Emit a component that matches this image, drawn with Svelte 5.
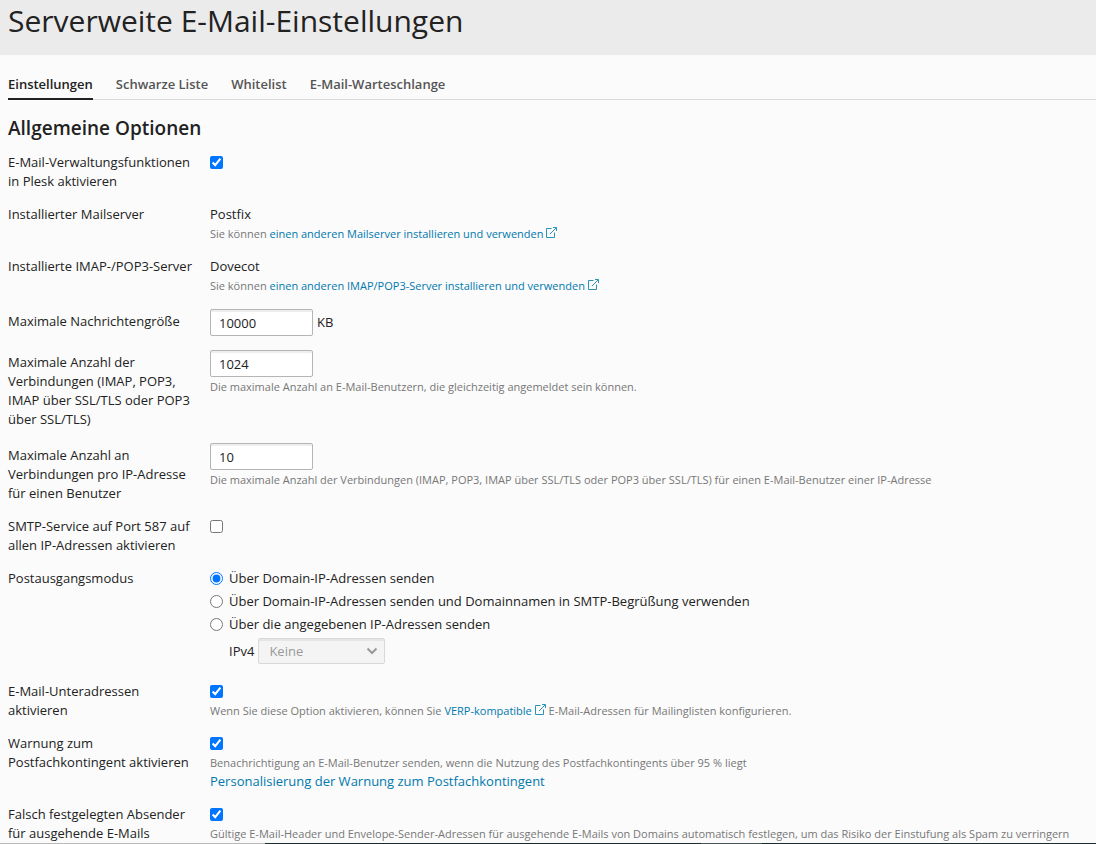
<script>
    let tabs = ['Einstellungen', 'Schwarze Liste', 'Whitelist', 'E-Mail-Warteschlange'];
    let activeTab = 'Einstellungen';

    let mailManagement = true;
    let messageSize = 10000;
    let maxConnections = 1024;
    let maxPerIp = 10;
    let submission = false;
    let outgoingMode = 'domain';
    let subAddresses = true;
    let quotaWarning = true;
    let fixSender = true;

    const modes = [
        { value: 'domain', label: 'Über Domain-IP-Adressen senden' },
        { value: 'greeting', label: 'Über Domain-IP-Adressen senden und Domainnamen in SMTP-Begrüßung verwenden' },
        { value: 'explicit', label: 'Über die angegebenen IP-Adressen senden' }
    ];
</script>

{#snippet external()}
    <svg class="external" width="11" height="11" viewBox="0 0 11 11" aria-hidden="true">
        <path d="M5.5 1.5h-5v9h8v-5M4 7l6-6M7 .5h3.5V4" />
    </svg>
{/snippet}

<header>
    <h1>Serverweite E-Mail-Einstellungen</h1>
</header>

<nav>
    {#each tabs as tab}
        <a href="#{tab}" class:active={tab === activeTab} on:click|preventDefault={() => (activeTab = tab)}>{tab}</a>
    {/each}
</nav>

<main>
    <h2>Allgemeine Optionen</h2>

    <form>
        <div class="row">
            <label for="management">E-Mail-Verwaltungsfunktionen in Plesk aktivieren</label>
            <div class="field">
                <div class="line"><input id="management" type="checkbox" bind:checked={mailManagement} /></div>
            </div>
        </div>

        <div class="row">
            <span class="name">Installierter Mailserver</span>
            <div class="field">
                <div>Postfix</div>
                <div class="hint">Sie können <a href="#mailserver">einen anderen Mailserver installieren und verwenden {@render external()}</a></div>
            </div>
        </div>

        <div class="row">
            <span class="name">Installierte IMAP-/POP3-Server</span>
            <div class="field">
                <div>Dovecot</div>
                <div class="hint">Sie können <a href="#imap">einen anderen IMAP/POP3-Server installieren und verwenden {@render external()}</a></div>
            </div>
        </div>

        <div class="row boxed">
            <label for="size">Maximale Nachrichtengröße</label>
            <div class="field">
                <div class="inline"><input id="size" type="text" bind:value={messageSize} /> KB</div>
            </div>
        </div>

        <div class="row boxed">
            <label for="connections">Maximale Anzahl der Verbindungen (IMAP, POP3, IMAP über SSL/TLS oder POP3 über SSL/TLS)</label>
            <div class="field">
                <div class="inline"><input id="connections" type="text" bind:value={maxConnections} /></div>
                <div class="hint">Die maximale Anzahl an E-Mail-Benutzern, die gleichzeitig angemeldet sein können.</div>
            </div>
        </div>

        <div class="row boxed">
            <label for="per-ip">Maximale Anzahl an Verbindungen pro IP-Adresse für einen Benutzer</label>
            <div class="field">
                <div class="inline"><input id="per-ip" type="text" bind:value={maxPerIp} /></div>
                <div class="hint">Die maximale Anzahl der Verbindungen (IMAP, POP3, IMAP über SSL/TLS oder POP3 über SSL/TLS) für einen E-Mail-Benutzer einer IP-Adresse</div>
            </div>
        </div>

        <div class="row">
            <label for="submission">SMTP-Service auf Port 587 auf allen IP-Adressen aktivieren</label>
            <div class="field">
                <div class="line"><input id="submission" type="checkbox" bind:checked={submission} /></div>
            </div>
        </div>

        <div class="row">
            <span class="name">Postausgangsmodus</span>
            <div class="field modes">
                {#each modes as mode}
                    <label class="line">
                        <input type="radio" name="mode" value={mode.value} bind:group={outgoingMode} />
                        {mode.label}
                    </label>
                {/each}
                <div class="address">
                    <label for="ipv4">IPv4</label>
                    <div class="select">
                        <select id="ipv4" disabled={outgoingMode !== 'explicit'}>
                            <option>Keine</option>
                        </select>
                        <svg width="12" height="8" viewBox="0 0 12 8" aria-hidden="true">
                            <path d="M1.5 1.5L6 6l4.5-4.5" />
                        </svg>
                    </div>
                </div>
            </div>
        </div>

        <div class="row">
            <label for="sub">E-Mail-Unteradressen aktivieren</label>
            <div class="field">
                <div class="line"><input id="sub" type="checkbox" bind:checked={subAddresses} /></div>
                <div class="hint">Wenn Sie diese Option aktivieren, können Sie <a href="#verp">VERP-kompatible {@render external()}</a> E-Mail-Adressen für Mailinglisten konfigurieren.</div>
            </div>
        </div>

        <div class="row">
            <label for="quota">Warnung zum Postfachkontingent aktivieren</label>
            <div class="field">
                <div class="line"><input id="quota" type="checkbox" bind:checked={quotaWarning} /></div>
                <div class="hint">Benachrichtigung an E-Mail-Benutzer senden, wenn die Nutzung des Postfachkontingents über 95 % liegt</div>
                <div><a href="#quota">Personalisierung der Warnung zum Postfachkontingent</a></div>
            </div>
        </div>

        <div class="row">
            <label for="sender">Falsch festgelegten Absender für ausgehende E-Mails</label>
            <div class="field">
                <div class="line"><input id="sender" type="checkbox" bind:checked={fixSender} /></div>
                <div class="hint">Gültige E-Mail-Header und Envelope-Sender-Adressen für ausgehende E-Mails von Domains automatisch festlegen, um das Risiko der Einstufung als Spam zu verringern</div>
            </div>
        </div>
    </form>
</main>

<div class="edge"></div>

<style>
    :global(body) {
        background: #fbfbfb;
        color: #222;
        font: 13px/19px "Open Sans", "Liberation Sans", sans-serif;
        height: 100vh;
        overflow: hidden;
    }

    header {
        background: #ebebeb;
        padding: 0 8px 14px;
    }

    h1 {
        margin: 0;
        font-size: 30px;
        line-height: 41px;
        font-weight: 400;
    }

    nav {
        display: flex;
        gap: 23px;
        margin-left: 8px;
        padding-top: 16px;
        border-bottom: 1px solid #d9d9d9;
    }

    nav a {
        padding: 4px 0;
        margin-bottom: -1px;
        border-bottom: 2px solid transparent;
        color: #555;
        font-weight: 600;
    }

    nav a.active {
        color: #222;
        border-color: #222;
    }

    a {
        color: #0079ad;
        text-decoration: none;
    }

    main {
        padding: 15px 0 0 8px;
    }

    h2 {
        margin: 0 0 12px;
        font-size: 19px;
        line-height: 26px;
        font-weight: 600;
    }

    form {
        display: flex;
        flex-direction: column;
        gap: 14px;
    }

    .row {
        display: grid;
        grid-template-columns: 187px 1fr;
        column-gap: 15px;
    }

    .boxed > label {
        padding-top: 3px;
    }

    .hint {
        font-size: 11px;
        color: #777;
    }

    .line,
    .inline,
    .address {
        display: flex;
        align-items: center;
    }

    .line {
        min-height: 19px;
    }

    .inline,
    .address {
        gap: 4px;
    }

    input[type="checkbox"],
    input[type="radio"] {
        width: 13px;
        height: 13px;
        margin: 0;
        accent-color: #0075ff;
    }

    input[type="text"] {
        box-sizing: border-box;
        width: 103px;
        height: 27px;
        padding: 0 8px;
        border: 1px solid #b5b5b5;
        border-radius: 2px;
        background: #fff;
        box-shadow: inset 0 2px 0 #eee;
        color: #222;
        font: inherit;
    }

    .modes {
        display: flex;
        flex-direction: column;
        gap: 4px;
        padding-bottom: 4px;
    }

    .modes .line {
        gap: 6px;
    }

    .address {
        padding-left: 19px;
    }

    .select {
        position: relative;
    }

    select {
        display: block;
        appearance: none;
        box-sizing: border-box;
        width: 127px;
        height: 26px;
        padding: 1px 10px 0;
        border: 1px solid #d9d9d9;
        border-radius: 2px;
        background: #f4f4f4;
        box-shadow: inset 0 2px 0 #e6e6e6;
        color: #999;
        font: inherit;
        opacity: 1;
    }

    .select svg {
        position: absolute;
        right: 7px;
        top: 9px;
        pointer-events: none;
        fill: none;
        stroke: #999;
        stroke-width: 2;
    }

    .external {
        fill: none;
        stroke: #2b93ba;
        stroke-width: 1;
    }

    .edge {
        position: fixed;
        inset: auto 0 0;
        height: 1px;
        background: linear-gradient(to right, #b9b9b9 265px, #1c2b2d 265px 701px, #4a5557 701px 762px, #1c2b2d 762px);
    }
</style>
